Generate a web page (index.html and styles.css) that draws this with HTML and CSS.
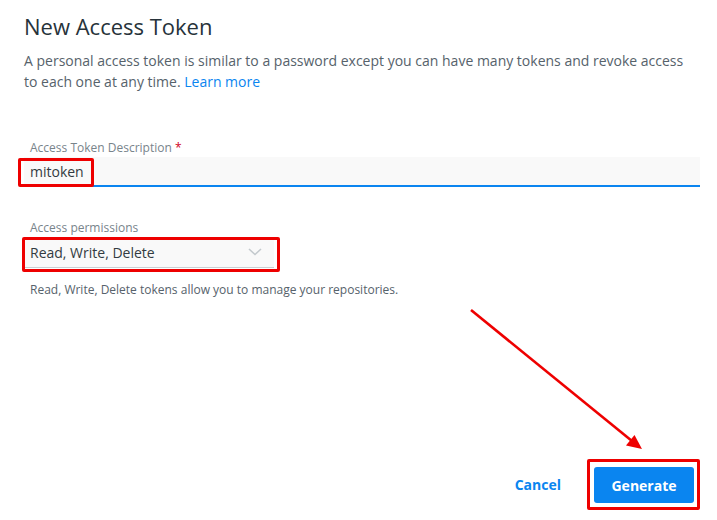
FILE: index.html
```html
<!DOCTYPE html>
<html lang="en">
<head>
<meta charset="utf-8">
<title>New Access Token</title>
<link rel="stylesheet" href="styles.css">
</head>
<body>
<main class="page">
  <h1 class="title">New Access Token</h1>
  <p class="intro">A personal access token is similar to a password except you can have many tokens and revoke access to each one at any time. <a class="link" href="#">Learn more</a></p>

  <form class="form">
    <div class="field field-desc">
      <label class="label">Access Token Description <span class="req">*</span></label>
      <div class="input">mitoken</div>
    </div>

    <div class="field field-perm">
      <label class="label">Access permissions</label>
      <div class="select">
        <span>Read, Write, Delete</span>
        <svg class="chev" width="14" height="8" viewBox="0 0 14 8"><path d="M1 1l6 5.5L13 1" fill="none" stroke="#c3c9cd" stroke-width="1.6"/></svg>
      </div>
      <p class="help">Read, Write, Delete tokens allow you to manage your repositories.</p>
    </div>

    <div class="actions">
      <button type="button" class="btn-cancel">Cancel</button>
      <button type="button" class="btn-primary">Generate</button>
    </div>
  </form>

  <div class="mark mark-input"></div>
  <div class="mark mark-select"></div>
  <div class="mark mark-btn"></div>
  <svg class="arrow" width="717" height="520" viewBox="0 0 717 520">
    <line x1="471" y1="310" x2="632" y2="441" stroke="#ee0000" stroke-width="2.6"/>
    <polygon points="642,449 626,445.5 634.5,435" fill="#ee0000"/>
  </svg>
</main>
</body>
</html>
```

FILE: styles.css
```css
* { box-sizing: border-box; }
html, body { margin: 0; padding: 0; background: #fff; }
body {
  font-family: "Open Sans", "Liberation Sans", sans-serif;
  color: #27343b;
}
.page {
  position: relative;
  width: 717px;
  height: 520px;
  padding: 11px 17px 0 24px;
}
.title {
  margin: 0;
  font-size: 22px;
  line-height: 30px;
  font-weight: 400;
  color: #27333a;
}
.intro {
  margin: 9px 0 0;
  font-size: 14px;
  line-height: 21px;
  color: #56626b;
}
.link { color: #0a85f0; text-decoration: none; }
.form { margin-top: 48px; display: flex; flex-direction: column; }
.field { display: flex; flex-direction: column; }
.label {
  font-size: 12px;
  line-height: 16px;
  color: #78848b;
  padding-left: 6px;
}
.req { color: #d0021b; }
.input {
  margin-top: 1px;
  height: 30px;
  background: #f9f9f9;
  border-bottom: 2px solid #0a85f0;
  padding: 0 6px;
  font-size: 14px;
  line-height: 29px;
  color: #333b41;
}
.field-perm { margin-top: 33px; }
.select {
  margin-top: 2px;
  width: 250px;
  height: 30px;
  background: #f9f9f9;
  border-bottom: 1px solid #c9cfd3;
  padding: 0 12px 0 6px;
  display: flex;
  align-items: center;
  justify-content: space-between;
  font-size: 14px;
  color: #333b41;
}
.chev { margin-top: -2px; }
.help {
  margin: 14px 0 0;
  padding-left: 6px;
  font-size: 12px;
  line-height: 16px;
  color: #56626b;
}
.actions {
  margin-top: 169px;
  display: flex;
  justify-content: flex-end;
  align-items: center;
  gap: 17px;
  padding-right: 6px;
}
.btn-cancel {
  border: 0;
  background: none;
  font-family: inherit;
  font-size: 14px;
  font-weight: 700;
  color: #0a85f0;
  padding: 0 16px 2px;
  height: 36px;
}
.btn-primary {
  border: 0;
  border-radius: 3px;
  background: #0a85f0;
  color: #fff;
  font-family: inherit;
  font-size: 14px;
  font-weight: 700;
  width: 100px;
  height: 36px;
}
.mark {
  position: absolute;
  border: 3px solid #ee0000;
  border-radius: 2px;
}
.mark-input { left: 18px; top: 158px; width: 76px; height: 29px; }
.mark-select { left: 22px; top: 237px; width: 258px; height: 35px; }
.mark-btn { left: 587px; top: 459px; width: 113px; height: 51px; }
.arrow { position: absolute; left: 0; top: 0; pointer-events: none; }
```
